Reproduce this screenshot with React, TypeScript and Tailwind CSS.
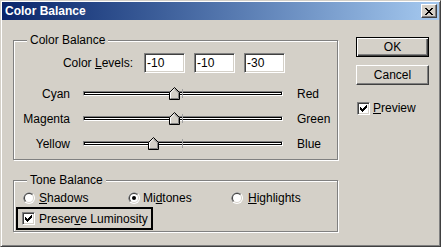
import React from "react";

const font = "font-['Liberation_Sans',Arial,sans-serif]";

function Radio({ checked }: { checked?: boolean }) {
  return (
    <svg width="12" height="12" viewBox="0 0 12 12" className="shrink-0">
      <circle cx="6" cy="6" r="6" fill="#ffffff" />
      <path d="M1.76 10.24A6 6 0 0 1 10.24 1.76Z" fill="#808080" />
      <circle cx="6" cy="6" r="5" fill="#d4d0c8" />
      <path d="M2.46 9.54A5 5 0 0 1 9.54 2.46Z" fill="#404040" />
      <circle cx="6" cy="6" r="4" fill="#ffffff" />
      {checked && <circle cx="6" cy="6" r="2" fill="#000000" />}
    </svg>
  );
}

function Checkbox() {
  return (
    <div className="flex h-[13px] w-[13px] shrink-0 items-center justify-center border border-t-[#808080] border-l-[#808080] border-r-white border-b-white bg-white shadow-[inset_1px_1px_0_#404040,inset_-1px_-1px_0_#d4d0c8]">
      <svg width="7" height="7" viewBox="0 0 7 7" shapeRendering="crispEdges">
        <path
          d="M0 2h1v3h-1z M1 3h1v3h-1z M2 4h1v3h-1z M3 3h1v3h-1z M4 2h1v3h-1z M5 1h1v3h-1z M6 0h1v3h-1z"
          fill="#000"
        />
      </svg>
    </div>
  );
}

function Thumb({ left }: { left: number }) {
  return (
    <svg width="11" height="13" viewBox="0 0 11 13" className="absolute top-[-5px]" style={{ left }}>
      <polygon points="5.5,0.5 10.5,5.5 10.5,12.5 0.5,12.5 0.5,5.5" fill="#d4d0c8" />
      <polyline points="1.5,11.5 1.5,5.9 5.5,1.9" fill="none" stroke="#ffffff" />
      <polyline points="5.5,1.9 9.5,5.9 9.5,11.5 1.5,11.5" fill="none" stroke="#808080" />
      <polygon points="5.5,0.5 10.5,5.5 10.5,12.5 0.5,12.5 0.5,5.5" fill="none" stroke="#000000" />
    </svg>
  );
}

function Slider({ left, right, thumb }: { left: string; right: string; thumb: number }) {
  return (
    <div className="flex h-[25px] items-center">
      <span className="w-[56px] text-right">{left}</span>
      <div className="relative ml-[13px] h-[5px] w-[200px] border border-t-[#808080] border-l-[#808080] border-r-white border-b-white bg-white shadow-[inset_1px_1px_0_#000,inset_-1px_-1px_0_#000]">
        <div className="absolute left-[98px] top-[-3px] h-[9px] w-px bg-[#a0a0a0]" />
        <Thumb left={thumb} />
      </div>
      <span className="ml-[14px]">{right}</span>
    </div>
  );
}

function GroupBox({ title, className, children }: { title: string; className: string; children: React.ReactNode }) {
  return (
    <div className={`relative w-[325px] border border-[#808080] shadow-[inset_1px_1px_0_#fff,1px_1px_0_#fff] ${className}`}>
      <span className="absolute left-[13px] top-[-8px] bg-[#d4d0c8] px-[3px] leading-[14px]">{title}</span>
      {children}
    </div>
  );
}

function LevelBox({ value }: { value: string }) {
  return (
    <div className="flex h-[20px] w-[41px] items-center border border-t-[#808080] border-l-[#808080] border-r-white border-b-white bg-white pl-[2px] shadow-[inset_1px_1px_0_#404040,inset_-1px_-1px_0_#d4d0c8]">
      {value}
    </div>
  );
}

export default function App() {
  return (
    <div
      className={`${font} h-[247px] w-[441px] border border-t-[#d4d0c8] border-l-[#d4d0c8] border-r-[#404040] border-b-[#404040] bg-[#d4d0c8] p-px text-[12px] leading-[14px] text-black shadow-[inset_1px_1px_0_#fff,inset_-1px_-1px_0_#808080]`}
    >
      {/* title bar */}
      <div className="flex h-[18px] items-center bg-linear-to-r from-[#0a246a] to-[#a6caf0] pl-[3px] pr-[2px]">
        <span className="text-[12px] font-bold text-white">Color Balance</span>
        <div className="ml-auto flex h-[14px] w-[16px] items-center justify-center border border-t-white border-l-white border-r-[#404040] border-b-[#404040] bg-[#d4d0c8] shadow-[inset_-1px_-1px_0_#808080]">
          <svg width="8" height="7" viewBox="0 0 8 7" shapeRendering="crispEdges" className="ml-[-1px]">
            <path
              d="M0 0h2v1h-2z M6 0h2v1h-2z M1 1h2v1h-2z M5 1h2v1h-2z M2 2h4v1h-4z M3 3h2v1h-2z M2 4h4v1h-4z M1 5h2v1h-2z M5 5h2v1h-2z M0 6h2v1h-2z M6 6h2v1h-2z"
              fill="#000"
            />
          </svg>
        </div>
      </div>

      <div className="flex items-start">
        {/* left column */}
        <div className="pl-[11px]">
          <GroupBox title="Color Balance" className="mt-[20px] h-[120px]">
            <div className="mt-[12px] flex items-center">
              <span className="w-[130px] pr-[11px] text-right">
                Color <u>L</u>evels:
              </span>
              <div className="flex gap-[9px]">
                <LevelBox value="-10" />
                <LevelBox value="-10" />
                <LevelBox value="-30" />
              </div>
            </div>
            <div className="mt-[8px]">
              <Slider left="Cyan" right="Red" thumb={85} />
              <Slider left="Magenta" right="Green" thumb={85} />
              <Slider left="Yellow" right="Blue" thumb={64} />
            </div>
          </GroupBox>

          <GroupBox title="Tone Balance" className="mt-[20px] h-[52px]">
            <div className="mt-[10px] flex h-[14px] items-center pl-[9px]">
              <div className="flex w-[105px] items-center gap-[4px]">
                <Radio />
                <span>
                  <u>S</u>hadows
                </span>
              </div>
              <div className="flex w-[103px] items-center gap-[3px]">
                <Radio checked />
                <span>
                  Mi<u>d</u>tones
                </span>
              </div>
              <div className="flex items-center gap-[5px]">
                <Radio />
                <span>
                  <u>H</u>ighlights
                </span>
              </div>
            </div>
            <div className="ml-[2px] mt-[2px] flex h-[23px] w-[137px] items-center gap-[4px] border-2 border-black pl-[4px]">
              <Checkbox />
              <span>
                Preser<u>v</u>e Luminosity
              </span>
            </div>
          </GroupBox>
        </div>

        {/* right column */}
        <div className="ml-[18px] mt-[17px] flex flex-col">
          <button className="flex h-[20px] w-[73px] items-center justify-center border border-black bg-[#d4d0c8] shadow-[inset_1px_1px_0_#fff,inset_-1px_-1px_0_#404040,inset_-2px_-2px_0_#808080]">
            OK
          </button>
          <button className="mt-[8px] flex h-[20px] w-[73px] items-center justify-center border border-t-white border-l-white border-r-[#404040] border-b-[#404040] bg-[#d4d0c8] shadow-[inset_-1px_-1px_0_#808080]">
            Cancel
          </button>
          <div className="ml-px mt-[16px] flex items-center gap-[3px]">
            <Checkbox />
            <span>
              <u>P</u>review
            </span>
          </div>
        </div>
      </div>
    </div>
  );
}
